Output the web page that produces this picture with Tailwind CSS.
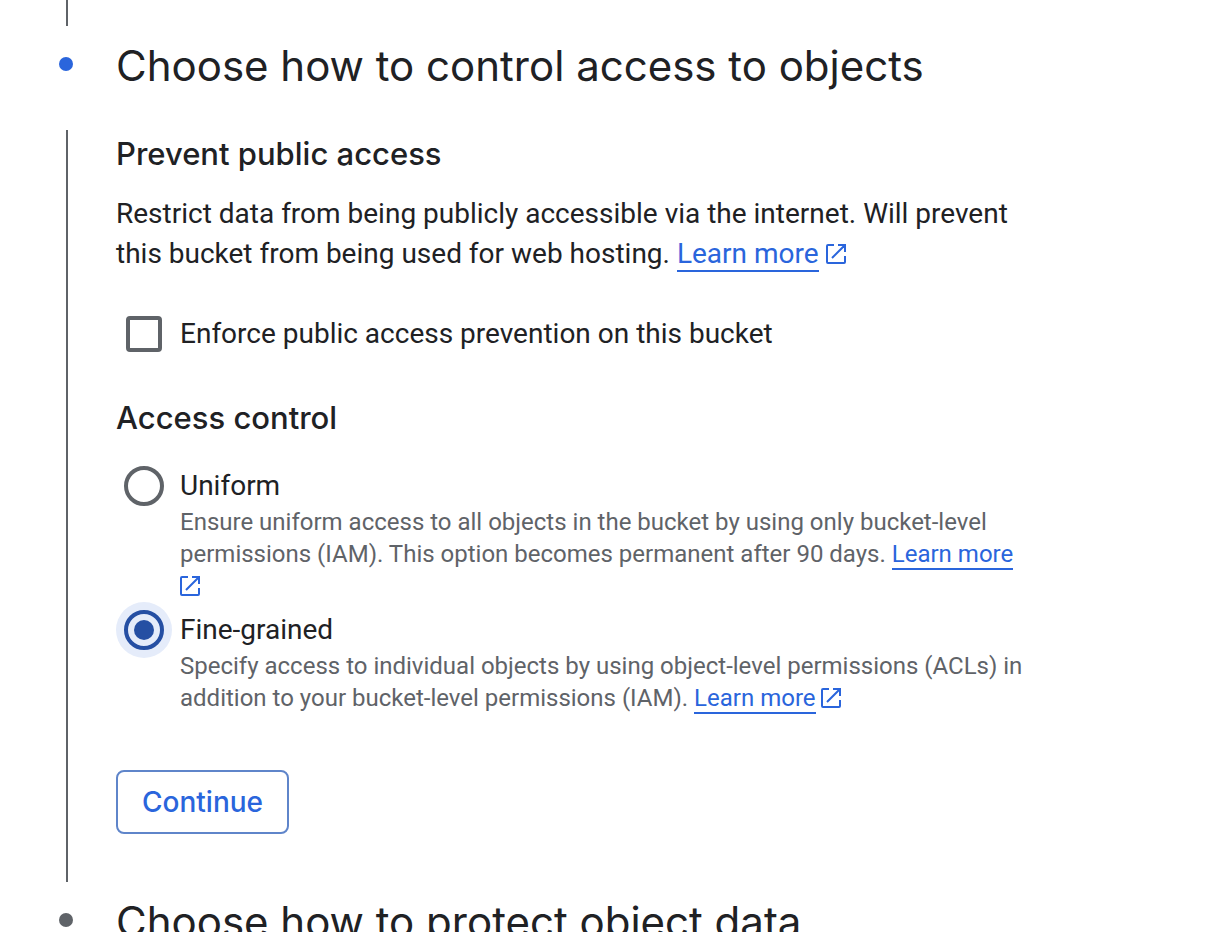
<!DOCTYPE html>
<html lang="en">
<head>
<meta charset="utf-8">
<meta name="viewport" content="width=device-width, initial-scale=1">
<title>Create a bucket</title>
<script src="https://cdn.jsdelivr.net/npm/@tailwindcss/browser@4"></script>
</head>
<body class="h-screen overflow-hidden bg-white font-['Roboto',sans-serif] text-[28px] leading-10 text-[#202124]">
<svg class="hidden" aria-hidden="true">
  <symbol id="open-in-new" viewBox="0 0 20 20">
    <path d="M8 1H2Q1 1 1 2V18Q1 19 2 19H18Q19 19 19 18V12M12 1H19V8M19 1L6 14" fill="none" stroke="currentColor" stroke-width="2"/>
  </symbol>
</svg>
<main>
  <div class="ml-[66px] h-[26px] w-[2px] bg-[#5f6368]"></div>
  <section>
    <header class="mb-6 flex items-start gap-[43px] pl-[59px]">
      <span class="mt-[31px] size-[14px] shrink-0 rounded-full bg-[#2a65dc]"></span>
      <h2 class="font-['Inter',sans-serif] text-[42px] leading-20">Choose how to control access to objects</h2>
    </header>
    <form class="ml-[66px] border-l-2 border-[#5f6368] pt-1 pr-6 pb-12 pl-12">
      <div class="max-w-[912px]">
        <h3 class="mb-5 font-['Inter',sans-serif] text-[31px] leading-10 font-medium">Prevent public access</h3>
        <p>Restrict data from being publicly accessible via the internet. Will prevent this bucket from being used for web hosting. <a href="#" class="text-[#2a65dc]"><span class="border-b-2">Learn more</span> <svg class="inline size-5 align-[-1px]"><use href="#open-in-new"/></svg></a></p>
        <div class="mt-10 flex items-center pl-[10px]">
          <input id="enforce" type="checkbox" class="mr-[18px] size-9 shrink-0 appearance-none rounded-[4px] border-4 border-[#5f6368] checked:bg-[#5f6368]">
          <label for="enforce">Enforce public access prevention on this bucket</label>
        </div>
        <fieldset class="mt-11">
          <legend class="mb-7 font-['Inter',sans-serif] text-[31px] leading-10 font-medium">Access control</legend>
          <div class="flex items-start pl-2">
            <input id="uniform" name="access" type="radio" class="mr-4 size-10 shrink-0 appearance-none rounded-full border-4 border-[#5f6368] checked:border-[#254fa3]">
            <div>
              <label for="uniform" class="block">Uniform</label>
              <p class="text-2xl leading-8 text-[#5f6368]">Ensure uniform access to all objects in the bucket by using only bucket-level permissions (IAM). This option becomes permanent after 90 days. <a href="#" class="text-[#2a65dc]"><span class="border-b-2">Learn more</span> <svg class="inline size-5 align-[-2px]"><use href="#open-in-new"/></svg></a></p>
            </div>
          </div>
          <div class="mt-2 flex items-start pl-2">
            <input id="fine" name="access" type="radio" checked class="mr-4 grid size-10 shrink-0 appearance-none place-items-center rounded-full border-4 border-[#5f6368] bg-[#e5ecfa] ring-8 ring-[#e5ecfa] checked:border-[#254fa3] before:size-5 before:rounded-full checked:before:bg-[#254fa3]">
            <div>
              <label for="fine" class="block">Fine-grained</label>
              <p class="text-2xl leading-8 text-[#5f6368]">Specify access to individual objects by using object-level permissions (ACLs) in addition to your bucket-level permissions (IAM). <a href="#" class="text-[#2a65dc]"><span class="border-b-2">Learn more</span> <svg class="inline size-5 align-[-2px]"><use href="#open-in-new"/></svg></a></p>
            </div>
          </div>
        </fieldset>
        <button type="button" class="mt-14 block h-16 min-w-[173px] rounded-lg border-2 border-[#5f85ca] px-6 font-['Inter',sans-serif] text-[28px] font-medium text-[#2a65dc]">Continue</button>
      </div>
    </form>
  </section>
  <section>
    <header class="flex items-start gap-[43px] pl-[59px]">
      <span class="mt-[31px] size-[14px] shrink-0 rounded-full bg-[#5f6368]"></span>
      <h2 class="font-['Inter',sans-serif] text-[42px] leading-20">Choose how to protect object data</h2>
    </header>
  </section>
</main>
</body>
</html>
